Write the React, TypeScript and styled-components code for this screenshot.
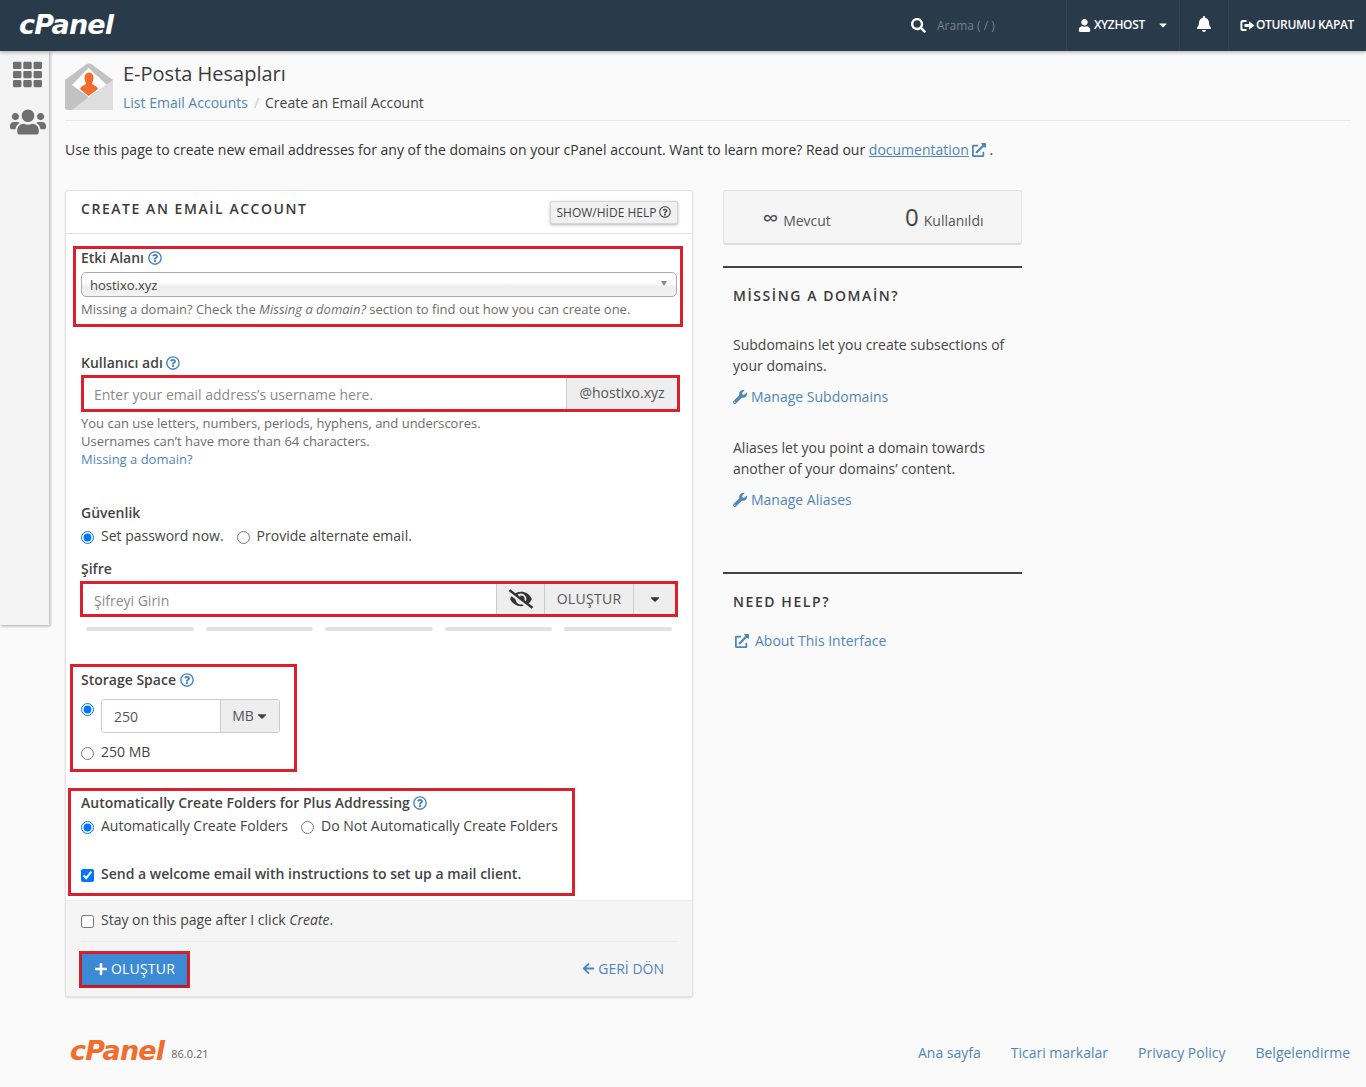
import React from "react";
import styled, { createGlobalStyle } from "styled-components";
import {
  FaSearch, FaUser, FaBell, FaTh, FaUsers, FaRegQuestionCircle, FaExternalLinkAlt,
  FaWrench, FaPlus, FaArrowLeft, FaEyeSlash, FaCaretDown,
} from "react-icons/fa";

const Global = createGlobalStyle`
  * { box-sizing: border-box; }
  html, body { margin: 0; padding: 0; background: #fafafa; }
  body { font-family: "Open Sans", "Noto Sans", sans-serif; font-size: 14px; line-height: 20px; color: #333; overflow: hidden; }
  a { color: #4f86b8; text-decoration: none; }
  input[type=radio], input[type=checkbox] { margin: 0; width: 13px; height: 13px; flex: none; accent-color: #0075ff; }
`;

const Page = styled.div`width: 1366px; height: 1087px; display: flex; flex-direction: column;`;

const Header = styled.header`
  height: 51px; background: #293a4a; display: flex; align-items: stretch; color: #fff;
  box-shadow: 0 1px 4px rgba(0,0,0,.35); position: relative; z-index: 2; flex: none;
`;
const Logo = styled.span<{ $orange?: boolean }>`
  font-family: "DejaVu Sans", "Open Sans", sans-serif; font-weight: 700; font-style: italic;
  font-size: 27px; letter-spacing: -0.8px; line-height: 1;
  color: ${p => (p.$orange ? "#f26c2b" : "#fff")};
`;
const HeaderLogo = styled.div`padding-left: 19px; display: flex; align-items: center; height: 49px;`;
const SearchBox = styled.div`
  margin-left: auto; width: 155px; display: flex; align-items: center; font-size: 12px; color: #76828d;
  svg { color: #fff; font-size: 15px; margin-right: 11px; }
`;
const HeadCell = styled.div<{ $w: number }>`
  width: ${p => p.$w}px; border-left: 1px solid #33434f; display: flex; align-items: center; font-size: 12px;
  letter-spacing: -0.35px; font-weight: 600; padding-bottom: 1px; white-space: nowrap;
`;
const UserCell = styled(HeadCell)`padding-left: 11px; svg:first-child { font-size: 13px; margin-right: 3px; } svg:last-child { margin-left: 12px; font-size: 12px; }`;
const BellCell = styled(HeadCell)`justify-content: center; font-size: 16px; padding-bottom: 3px;`;
const LogoutCell = styled(HeadCell)`padding-left: 11px;`;
const LogoutGlyph = styled.svg`width: 15px; height: 13px; margin-right: 1px; flex: none;`;

const Body = styled.div`flex: 1; display: flex; align-items: flex-start;`;
const Sidebar = styled.nav`
  width: 49px; height: 574px; background: #f4f4f4; box-shadow: 1px 1px 3px rgba(0,0,0,.35); flex: none;
  display: flex; flex-direction: column; align-items: center; color: #6f6f6f; padding: 9px 0 0 6px;
`;
const GridIcon = styled(FaTh)`font-size: 29px;`;
const PeopleIcon = styled(FaUsers)`font-size: 36px; height: 30px; margin-top: 18px;`;
const Main = styled.main`flex: 1; padding: 0 15px 0 16px; min-width: 0;`;

const TitleBar = styled.div`height: 70px; border-bottom: 1px solid #e8e8e8; display: flex; padding-top: 11px;`;
const AppIcon = styled.svg`width: 48px; height: 48px; flex: none; margin: 1px 10px 0 0;`;
const TitleText = styled.div`display: flex; flex-direction: column;`;
const H1 = styled.h1`margin: 0; font-size: 20px; font-weight: 400; line-height: 24px; color: #3b3b3b;`;
const Crumbs = styled.div`margin-top: 7px; display: flex; font-size: 14px; color: #444;`;
const CrumbSep = styled.span`color: #ccc; margin: 0 6px;`;
const Intro = styled.p`margin: 19px 0 0; font-size: 14px; color: #333; svg { font-size: 14px; margin-left: 3px; vertical-align: -2px; } a { text-decoration: underline; }`;

const Columns = styled.div`display: flex; margin-top: 30px; gap: 30px; align-items: flex-start;`;
const Card = styled.section`width: 628px; height: 807px; background: #fff; border: 1px solid #e3e3e3; border-radius: 3px; box-shadow: 0 1px 2px rgba(0,0,0,.12); display: flex; flex-direction: column;`;
const CardHead = styled.div`height: 43px; flex: none; border-bottom: 1px solid #e3e3e3; display: flex; align-items: center; justify-content: space-between; padding: 0 15px;`;
const CardTitle = styled.h2`margin: 0; font-size: 14px; font-weight: 600; letter-spacing: 1.55px; color: #3a3a3a; padding-bottom: 6px;`;
const HelpToggle = styled.button`
  height: 23px; width: 128px; padding: 0; border: 1px solid #d5d5d5; background: #f1f1f1; border-radius: 2px; margin-right: -1px;
  box-shadow: 0 1px 3px rgba(0,0,0,.3); font: 12px "Open Sans", sans-serif; color: #444; display: flex; align-items: center; justify-content: center; gap: 3px;
  svg { font-size: 12px; }
`;
const CardBody = styled.div`flex: 1; padding-left: 15px;`;
const Mark = styled.div<{ $x: number; $w: number; $h: number; $top: number }>`
  border: 3px solid #d9202e; margin-left: ${p => p.$x}px; margin-top: ${p => p.$top}px; width: ${p => p.$w}px; height: ${p => p.$h}px;
`;
const DomainMark = styled(Mark)`padding: 0 3px 0 5px;`;
const Label = styled.div<{ $top?: number }>`font-size: 14px; font-weight: 600; line-height: 18px; color: #444; margin-top: ${p => p.$top ?? 0}px; svg { color: #3f7fc0; font-size: 14px; vertical-align: -2px; }`;
const SelectBox = styled.div`
  margin-top: 5px; height: 25px; border: 1px solid #aaa; border-radius: 5px; padding: 0 8px; display: flex; align-items: center; justify-content: space-between;
  background: linear-gradient(#fff 40%, #eee 60%, #f3f3f3); font-size: 13px; color: #444;
  &::after { content: ""; border: 3.5px solid transparent; border-top: 5px solid #888; border-bottom: 0; margin-right: 1px; margin-bottom: 3px; }
`;
const Help = styled.div<{ $top?: number }>`font-size: 13px; line-height: 18px; color: #6d6d6d; margin-top: ${p => p.$top ?? 0}px;`;
const GroupMark = styled(Mark)`display: flex; align-items: stretch;`;
const TextInput = styled.input`
  flex: 1; min-width: 0; border: 0; outline: 0; background: #fff; padding: 2px 10px 0; font: 14px "Open Sans", sans-serif; color: #555;
  &::placeholder { color: #8a8a8a; opacity: 1; }
`;
const PasswordInput = styled(TextInput)`padding-left: 11px;`;
const Addon = styled.div<{ $w: number }>`
  flex: none; width: ${p => p.$w}px; background: #eee; border-left: 1px solid #ccc; color: #555; font-size: 14px; display: flex; align-items: center; justify-content: center;
`;
const DomainAddon = styled(Addon)`padding-bottom: 2px;`;
const GenerateAddon = styled(Addon)`letter-spacing: 0.3px;`;
const RadioRow = styled.div<{ $top: number }>`display: flex; align-items: center; margin-top: ${p => p.$top}px; height: 20px; font-size: 14px; color: #444;`;
const Choice = styled.label<{ $gap?: number }>`display: flex; align-items: center; gap: 7px; margin-right: ${p => p.$gap ?? 0}px; input { position: relative; top: 1px; }`;
const Bars = styled.div`display: flex; gap: 12px; margin: 10px 0 0 5px; width: 586px;`;
const Bar = styled.div`flex: 1; height: 4px; border-radius: 2px; background: #e1e1e1;`;
const StorageMark = styled(Mark)`padding: 4px 0 0 8px;`;
const QuotaRow = styled.div`display: flex; margin-top: 10px; gap: 7px;`;
const QuotaRadio = styled.input`margin-top: 4px !important;`;
const QuotaGroup = styled.div`width: 179px; height: 34px; display: flex; border: 1px solid #ccc; border-radius: 3px; overflow: hidden; input { padding: 0 12px; }`;
const UnitAddon = styled(Addon)`padding-left: 1px; svg { font-size: 14px; margin-left: 1px; color: #444; }`;
const PlusMark = styled(Mark)`padding: 3px 0 0 10px;`;
const WelcomeText = styled.span`font-weight: 600; color: #444; white-space: nowrap;`;
const CardFoot = styled.div`height: 96px; flex: none; background: #f5f5f5; border-top: 1px solid #eee; padding: 9px 14px 0 15px;`;
const Em = styled.em``;
const FootRule = styled.div`height: 1px; background: #ebebeb; margin-top: 11px;`;
const FootActions = styled.div`display: flex; align-items: center; justify-content: space-between; margin: 9px 14px 0 -2px;`;
const CreateMark = styled.div`border: 3px solid #d9202e; width: 111px; height: 37px;`;
const CreateButton = styled.button`
  width: 100%; height: 100%; border: 0; padding: 0 0 2px; background: #3c8ad5; color: #fff; font: 14px "Open Sans", sans-serif; letter-spacing: 0.2px; box-shadow: 0 1px 3px rgba(0,0,0,.3);
  display: flex; align-items: center; justify-content: center; gap: 3px; svg { font-size: 14px; }
`;
const BackLink = styled.a`font-size: 14px; display: flex; align-items: center; gap: 3px; padding-bottom: 2px; svg { font-size: 13px; }`;

const Side = styled.aside`width: 299px; flex: none;`;
const Stats = styled.div`height: 55px; background: #f5f5f5; border: 1px solid #e3e3e3; border-bottom: 2px solid #ddd; border-radius: 3px; display: flex;`;
const Stat = styled.div<{ $shift: number }>`flex: 1; display: flex; align-items: baseline; justify-content: center; padding-top: 11px; padding-right: ${p => p.$shift}px; color: #555; gap: 5px;`;
const Big = styled.span<{ $size: number }>`font-size: ${p => p.$size}px; line-height: 30px; color: #444;`;
const Rule = styled.div<{ $top: number }>`height: 2px; background: #444; margin-top: ${p => p.$top}px;`;
const SideHead = styled.h3`margin: 18px 0 0 10px; font-size: 14px; font-weight: 600; letter-spacing: 1.57px; line-height: 20px; color: #3a3a3a;`;
const SideText = styled.p<{ $top: number }>`margin: ${p => p.$top}px 0 0 10px; line-height: 21px; color: #444;`;
const SideLink = styled.a<{ $top: number }>`display: block; margin: ${p => p.$top}px 0 0 10px; svg { font-size: 14px; margin-right: 4px; vertical-align: -2px; }`;
const AboutLink = styled(SideLink)`svg { margin: 0 6px 0 2px; }`;

const Footer = styled.footer`margin-top: 33px; height: 40px; display: flex; align-items: center; justify-content: space-between; padding: 0 0 0 5px;`;
const Version = styled.span`font-size: 11px; color: #666; margin-left: 7px; position: relative; top: 4px;`;
const FootBrand = styled.div`display: flex; align-items: center;`;
const FootLinks = styled.div`display: flex; gap: 30px; margin-right: 1px; padding-top: 5px;`;

function EnvelopeIcon() {
  return (
    <AppIcon viewBox="0 0 48 48" aria-hidden="true">
      <path d="M0 17 L21 1.5 Q24 -0.5 27 1.5 L48 17 V45 a2 2 0 0 1 -2 2 H2 a2 2 0 0 1 -2 -2 Z" fill="#c2c2c2" />
      <path d="M7 22 L23.5 5 L42 22 L23.5 34 Z" fill="#fff" />
      <path d="M48 17 V45 a2 2 0 0 1 -2 2 H7 L23.5 34 Z" fill="#dedede" />
      <path d="M19.5 14.5 a4.5 5 0 1 1 9 0 c0 3 -1 4.6 -1.6 6 c1 1.8 5.1 2.2 6.1 5.4 L23.5 33 L15 26 c1 -3.2 5.1 -3.6 6.1 -5.5 c-.6 -1.4 -1.6 -3 -1.6 -6 Z" fill="#f26c2b" />
    </AppIcon>
  );
}

export default function App() {
  return (
    <Page>
      <Global />
      <Header>
        <HeaderLogo><Logo>cPanel</Logo></HeaderLogo>
        <SearchBox><FaSearch />Arama ( / )</SearchBox>
        <UserCell $w={113}><FaUser />XYZHOST<FaCaretDown /></UserCell>
        <BellCell $w={49}><FaBell /></BellCell>
        <LogoutCell $w={138}>
          <LogoutGlyph viewBox="0 0 15 13" aria-hidden="true">
            <path d="M6.5 1 H3 A2.6 2.6 0 0 0 .4 3.6 V9.4 A2.6 2.6 0 0 0 3 12 H6.5 V10 H3.4 A1 1 0 0 1 2.4 9 V4 A1 1 0 0 1 3.4 3 H6.5 Z" fill="#fff" />
            <path d="M4.5 5 H9 V2.2 L14.5 6.5 L9 10.8 V8 H4.5 Z" fill="#fff" />
          </LogoutGlyph>
          OTURUMU KAPAT
        </LogoutCell>
      </Header>
      <Body>
        <Sidebar><GridIcon /><PeopleIcon /></Sidebar>
        <Main>
          <TitleBar>
            <EnvelopeIcon />
            <TitleText>
              <H1>E-Posta Hesapları</H1>
              <Crumbs><a href="#">List Email Accounts</a><CrumbSep>/</CrumbSep>Create an Email Account</Crumbs>
            </TitleText>
          </TitleBar>
          <Intro>Use this page to create new email addresses for any of the domains on your cPanel account. Want to learn more? Read our <a href="#">documentation</a><a href="#"><FaExternalLinkAlt /></a> .</Intro>
          <Columns>
            <Card>
              <CardHead>
                <CardTitle>CREATE AN EMAİL ACCOUNT</CardTitle>
                <HelpToggle>SHOW/HİDE HELP <FaRegQuestionCircle /></HelpToggle>
              </CardHead>
              <CardBody>
                <DomainMark $x={-8} $w={610} $h={81} $top={12}>
                  <Label>Etki Alanı <FaRegQuestionCircle /></Label>
                  <SelectBox>hostixo.xyz</SelectBox>
                  <Help $top={3}>Missing a domain? Check the <em>Missing a domain?</em> section to find out how you can create one.</Help>
                </DomainMark>
                <Label $top={27}>Kullanıcı adı <FaRegQuestionCircle /></Label>
                <GroupMark $x={0} $w={599} $h={37} $top={3}>
                  <TextInput placeholder="Enter your email address’s username here." />
                  <DomainAddon $w={111}>@hostixo.xyz</DomainAddon>
                </GroupMark>
                <Help $top={2}>You can use letters, numbers, periods, hyphens, and underscores.<br />Usernames can’t have more than 64 characters.<br /><a href="#">Missing a domain?</a></Help>
                <Label $top={36}>Güvenlik</Label>
                <RadioRow $top={4}>
                  <Choice $gap={13}><input type="radio" name="sec" defaultChecked />Set password now.</Choice>
                  <Choice><input type="radio" name="sec" />Provide alternate email.</Choice>
                </RadioRow>
                <Label $top={14}>Şifre</Label>
                <GroupMark $x={-1} $w={598} $h={36} $top={3}>
                  <PasswordInput placeholder="Şifreyi Girin" />
                  <Addon $w={48}><FaEyeSlash size={24} color="#333" /></Addon>
                  <GenerateAddon $w={89}>OLUŞTUR</GenerateAddon>
                  <Addon $w={42}><FaCaretDown size={14} color="#333" /></Addon>
                </GroupMark>
                <Bars><Bar /><Bar /><Bar /><Bar /><Bar /></Bars>
                <StorageMark $x={-11} $w={227} $h={108} $top={33}>
                  <Label>Storage Space <FaRegQuestionCircle /></Label>
                  <QuotaRow>
                    <QuotaRadio type="radio" name="quota" defaultChecked />
                    <QuotaGroup>
                      <TextInput defaultValue="250" />
                      <UnitAddon $w={59}>MB<FaCaretDown /></UnitAddon>
                    </QuotaGroup>
                  </QuotaRow>
                  <RadioRow $top={9}><Choice><input type="radio" name="quota" />250 MB</Choice></RadioRow>
                </StorageMark>
                <PlusMark $x={-13} $w={507} $h={108} $top={16}>
                  <Label>Automatically Create Folders for Plus Addressing <FaRegQuestionCircle /></Label>
                  <RadioRow $top={4}>
                    <Choice $gap={13}><input type="radio" name="plus" defaultChecked />Automatically Create Folders</Choice>
                    <Choice><input type="radio" name="plus" />Do Not Automatically Create Folders</Choice>
                  </RadioRow>
                  <RadioRow $top={28}>
                    <Choice><input type="checkbox" defaultChecked /><WelcomeText>Send a welcome email with instructions to set up a mail client.</WelcomeText></Choice>
                  </RadioRow>
                </PlusMark>
              </CardBody>
              <CardFoot>
                <RadioRow $top={0}><Choice><input type="checkbox" /><span>Stay on this page after I click <Em>Create</Em>.</span></Choice></RadioRow>
                <FootRule />
                <FootActions>
                  <CreateMark><CreateButton><FaPlus />OLUŞTUR</CreateButton></CreateMark>
                  <BackLink href="#"><FaArrowLeft />GERİ DÖN</BackLink>
                </FootActions>
              </CardFoot>
            </Card>
            <Side>
              <Stats>
                <Stat $shift={2}><Big $size={22}>∞</Big>Mevcut</Stat>
                <Stat $shift={4}><Big $size={24}>0</Big>Kullanıldı</Stat>
              </Stats>
              <Rule $top={21} />
              <SideHead>MİSSİNG A DOMAİN?</SideHead>
              <SideText $top={28}>Subdomains let you create subsections of your domains.</SideText>
              <SideLink $top={11} href="#"><FaWrench />Manage Subdomains</SideLink>
              <SideText $top={30}>Aliases let you point a domain towards another of your domains’ content.</SideText>
              <SideLink $top={11} href="#"><FaWrench />Manage Aliases</SideLink>
              <Rule $top={62} />
              <SideHead>NEED HELP?</SideHead>
              <AboutLink $top={19} href="#"><FaExternalLinkAlt />About This Interface</AboutLink>
            </Side>
          </Columns>
          <Footer>
            <FootBrand><Logo $orange>cPanel</Logo><Version>86.0.21</Version></FootBrand>
            <FootLinks><a href="#">Ana sayfa</a><a href="#">Ticari markalar</a><a href="#">Privacy Policy</a><a href="#">Belgelendirme</a></FootLinks>
          </Footer>
        </Main>
      </Body>
    </Page>
  );
}
